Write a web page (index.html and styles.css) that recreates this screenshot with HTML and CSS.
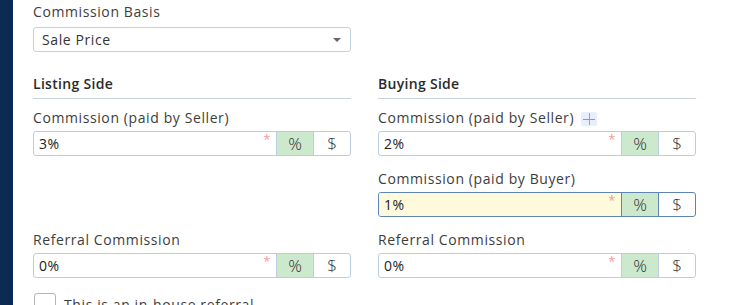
FILE: index.html
```html
<!DOCTYPE html>
<html lang="en">
<head>
    <meta charset="UTF-8">
    <meta name="viewport" content="width=device-width, initial-scale=1.0">
    <title>Commission</title>
    <link rel="stylesheet" href="styles.css">
</head>
<body>
    <div class="page">
        <aside class="sidebar"></aside>

        <main class="content">
            <div class="basis">
                <label class="label">Commission Basis</label>
                <div class="select">
                    <span>Sale Price</span>
                    <span class="caret"></span>
                </div>
            </div>

            <div class="sides">
                <h3 class="side-title">Listing Side</h3>
                <h3 class="side-title">Buying Side</h3>

                <div class="field">
                    <label class="label">Commission (paid by Seller)</label>
                    <div class="group">
                        <div class="value">3%<span class="req">*</span></div>
                        <div class="unit active">%</div>
                        <div class="unit">$</div>
                    </div>
                </div>
                <div class="field">
                    <label class="label">Commission (paid by Seller)<span class="add">
                            <svg width="12" height="12" viewBox="0 0 12 12">
                                <path d="M0 6.5h12" stroke="#7f97dc" stroke-width="1"/>
                                <path d="M6.5 0v12" stroke="#b08fd8" stroke-width="1"/>
                            </svg>
                        </span></label>
                    <div class="group">
                        <div class="value">2%<span class="req">*</span></div>
                        <div class="unit active">%</div>
                        <div class="unit">$</div>
                    </div>
                </div>

                <div class="empty"></div>
                <div class="field">
                    <label class="label">Commission (paid by Buyer)</label>
                    <div class="group focus">
                        <div class="value">1%<span class="req">*</span></div>
                        <div class="unit active">%</div>
                        <div class="unit">$</div>
                    </div>
                </div>

                <div class="field">
                    <label class="label">Referral Commission</label>
                    <div class="group">
                        <div class="value">0%<span class="req">*</span></div>
                        <div class="unit active">%</div>
                        <div class="unit">$</div>
                    </div>
                </div>
                <div class="field">
                    <label class="label">Referral Commission</label>
                    <div class="group">
                        <div class="value">0%<span class="req">*</span></div>
                        <div class="unit active">%</div>
                        <div class="unit">$</div>
                    </div>
                </div>
            </div>

            <label class="check">
                <span class="box"></span>
                This is an in-house referral
            </label>
        </main>
    </div>
</body>
</html>
```

FILE: styles.css
```css
body {
    margin: 0;
    font-family: "Open Sans", "Noto Sans", sans-serif;
    font-size: 14px;
    letter-spacing: 0.6px;
    color: #3d3d3d;
    background: #fff;
    overflow: hidden;
}
.page {
    display: flex;
    min-height: 305px;
}
.sidebar {
    flex: none;
    width: 13px;
    background: #0b2b55;
}
.content {
    padding: 2px 0 0 20px;
}
.label {
    display: block;
    line-height: 20px;
    margin-bottom: 3px;
}
.basis .label {
    margin-bottom: 5px;
}
.select {
    box-sizing: border-box;
    width: 318px;
    height: 25px;
    border: 1px solid #c3d2e0;
    border-radius: 3px;
    display: flex;
    align-items: center;
    justify-content: space-between;
    padding: 0 9px 0 8px;
    color: #333;
}
.caret {
    width: 0;
    height: 0;
    border-left: 4px solid transparent;
    border-right: 4px solid transparent;
    border-top: 4px solid #666;
}

/* two columns */
.sides {
    display: grid;
    grid-template-columns: 318px 318px;
    column-gap: 27px;
    margin-top: 22px;
}
.side-title {
    margin: 0 0 9px;
    font-size: 14px;
    font-weight: 600;
    letter-spacing: 0.3px;
    line-height: 20px;
    padding-bottom: 4px;
    border-bottom: 1px solid #c9d2dc;
    color: #2a2a2a;
}
.field {
    margin-bottom: 13px;
}
.add {
    display: inline-flex;
    align-items: center;
    justify-content: center;
    width: 16px;
    height: 14px;
    margin-left: 7px;
    vertical-align: -2px;
    background: #e8eefb;
    border-radius: 2px;
}
.group {
    box-sizing: border-box;
    display: flex;
    height: 25px;
    border: 1px solid #bccede;
    border-radius: 3px;
    overflow: hidden;
}
.value {
    flex: 1;
    position: relative;
    display: flex;
    align-items: center;
    padding-left: 5px;
    color: #222;
}
.req {
    position: absolute;
    right: 5px;
    top: 1px;
    font-size: 13px;
    line-height: 13px;
    color: #f29a9a;
}
.unit {
    width: 36px;
    flex: none;
    display: flex;
    align-items: center;
    justify-content: center;
    border-left: 1px solid #bccede;
    font-size: 17px;
    font-weight: 300;
    letter-spacing: 0;
    color: #2e2e2e;
}
.unit.active {
    background: #cde9cd;
}
.focus {
    border-color: #5f86b2;
}
.focus .value {
    background: #fffadb;
}
.focus .unit {
    border-left-color: #5f86b2;
}

.check {
    display: flex;
    align-items: center;
    gap: 8px;
    margin-top: 2px;
    margin-left: 1px;
}
.box {
    box-sizing: border-box;
    width: 22px;
    height: 22px;
    border: 1px solid #b5b5b5;
    border-radius: 3px;
}
```
